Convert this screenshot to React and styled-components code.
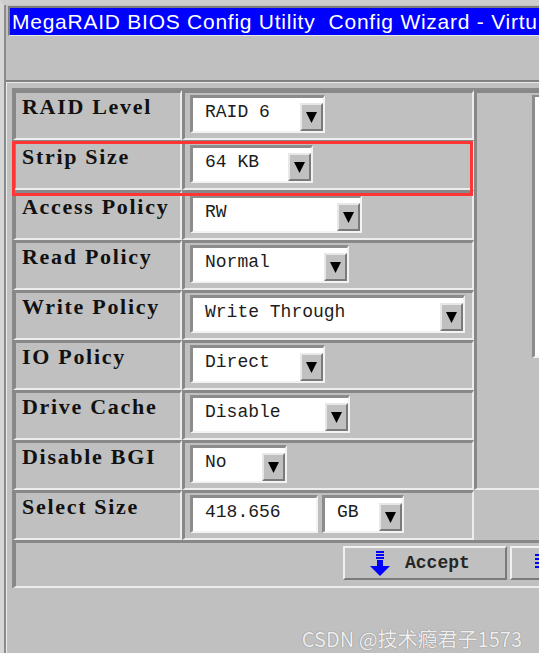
import React from 'react';
import styled, { createGlobalStyle } from 'styled-components';

const Global = createGlobalStyle`
  html, body { margin: 0; padding: 0; background: #c0c0c0; }
  body { width: 539px; height: 653px; overflow: hidden; }
  #root { width: 539px; height: 653px; }
`;

const Screen = styled.div`
  position: relative;
  box-sizing: border-box;
  width: 539px;
  height: 653px;
  overflow: hidden;
  background: #c0c0c0;
  border-top: 5px solid #cdcdcd;
  border-left: 4px solid #d6d6d6;
  display: flex;
  flex-direction: column;
`;

const Frame = styled.div`
  flex: 1;
  display: flex;
  flex-direction: column;
  border-left: 2px solid #8a8a8a;
  min-width: 0;
`;

const TitleBar = styled.div`
  margin: 1px 0 0 2px;
  height: 27px;
  border-top: 2px solid #7c7c7c;
  border-left: 2px solid #7c7c7c;
  border-bottom: 1px solid #e6e6e6;
  background: #0000ff;
  color: #ffffff;
  font-family: "Liberation Sans", Arial, sans-serif;
  font-size: 21px;
  letter-spacing: 0.75px;
  line-height: 27px;
  padding-left: 2px;
  white-space: pre;
  overflow: hidden;
`;

const Panel = styled.div`
  flex: 1;
  margin-top: 44px;
  border-top: 2px solid #808080;
  box-shadow: inset 1px 1px 0 #ececec;
  padding: 6px 0 0 6px;
`;

const Table = styled.div`
  border-top: 2px solid #8a8a8a;
  border-left: 1px solid #8a8a8a;
  display: flex;
  flex-direction: column;
`;

const Upper = styled.div`
  display: flex;
  align-items: flex-start;
`;

const Rows = styled.div`
  display: flex;
  flex-direction: column;
  width: 461px;
  flex-shrink: 0;
`;

const Row = styled.div`
  position: relative;
  display: flex;
  height: 50px;
`;

const Highlight = styled.div`
  position: absolute;
  z-index: 2;
  left: -1px;
  top: 1px;
  width: 461px;
  height: 55px;
  box-sizing: border-box;
  border: 3px solid #ff3535;
  pointer-events: none;
`;

const Cell = styled.div`
  box-sizing: border-box;
  height: 100%;
  border-top: 3px solid #888888;
  border-left: 3px solid #888888;
  border-bottom: 2px solid #ededed;
  border-right: 2px solid #ededed;
`;

const LabelCell = styled(Cell)`
  width: 169px;
  padding: 3px 0 0 6px;
  font-family: "Liberation Serif", "Times New Roman", serif;
  font-weight: bold;
  font-size: 22px;
  line-height: 1;
  letter-spacing: 1.7px;
  color: #111111;
  white-space: nowrap;
`;

const ValueCell = styled(Cell)`
  width: 292px;
  padding: 2px 0 0 5px;
  display: flex;
  align-items: flex-start;
  gap: 4px;
`;

const Field = styled.div`
  box-sizing: border-box;
  width: ${(p) => p.$w}px;
  height: 38px;
  flex-shrink: 0;
  display: flex;
  align-items: flex-end;
  background: #ffffff;
  border-top: 3px solid #8c8c8c;
  border-left: 3px solid #8c8c8c;
  border-bottom: 2px solid #f2f2f2;
  border-right: 2px solid #f2f2f2;
`;

const FieldText = styled.span`
  flex: 1;
  align-self: stretch;
  display: flex;
  align-items: center;
  padding: 0 0 5px 12px;
  font-family: "Liberation Mono", "Courier New", monospace;
  font-size: 18px;
  color: #1c1c1c;
  white-space: pre;
`;

const DropBtn = styled.span`
  box-sizing: border-box;
  width: 23px;
  height: 28px;
  flex-shrink: 0;
  background: #c0c0c0;
  border-top: 2px solid #e8e8e8;
  border-left: 2px solid #e8e8e8;
  border-bottom: 2px solid #7a7a7a;
  border-right: 2px solid #7a7a7a;
  display: flex;
  align-items: center;
  justify-content: center;
`;

const RightPanel = styled.div`
  box-sizing: border-box;
  flex: 1;
  height: 400px;
  border-top: 3px solid #888888;
  border-left: 3px solid #888888;
  border-bottom: 2px solid #ededed;
  padding: 2px 0 0 55px;
  display: flex;
  align-items: flex-start;
`;

const ListBox = styled.div`
  flex: 1;
  height: 263px;
  box-sizing: border-box;
  background: #ffffff;
  border-top: 2px solid #8c8c8c;
  border-left: 3px solid #8c8c8c;
  border-bottom: 2px solid #f2f2f2;
`;

const ButtonRow = styled.div`
  box-sizing: border-box;
  width: 600px;
  height: 48px;
  flex-shrink: 0;
  border-top: 3px solid #888888;
  border-left: 3px solid #888888;
  border-bottom: 2px solid #ededed;
  display: flex;
  gap: 3px;
  padding: 3px 0 0 327px;
`;

const Btn = styled.div`
  box-sizing: border-box;
  width: 164px;
  height: 34px;
  flex-shrink: 0;
  background: #c0c0c0;
  border-top: 2px solid #f0f0f0;
  border-left: 2px solid #f0f0f0;
  border-bottom: 2px solid #7a7a7a;
  border-right: 2px solid #7a7a7a;
  display: flex;
  align-items: center;
  gap: 15px;
  padding-left: ${(p) => p.$pad}px;
  font-family: "Liberation Mono", "Courier New", monospace;
  font-weight: bold;
  font-size: 18px;
  color: #262626;
`;

const Watermark = styled.div`
  position: absolute;
  right: 17px;
  bottom: 3px;
  font-family: "Noto Sans CJK SC", "Noto Sans", sans-serif;
  font-size: 20px;
  line-height: 22px;
  color: #eeeeee;
  text-shadow: 0 0 1px #8a8a8a, 0 0 1px #8a8a8a;
  white-space: nowrap;
`;

const Triangle = () => (
  <svg width="11" height="12" viewBox="0 0 11 12">
    <polygon points="0,1 11,1 5.5,12" fill="#000" />
  </svg>
);

const AcceptIcon = () => (
  <svg width="20" height="25" viewBox="0 0 20 25">
    <rect x="6" y="0" width="8" height="2" fill="#0000ff" />
    <rect x="6" y="3" width="8" height="2" fill="#0000ff" />
    <rect x="6" y="6" width="8" height="2" fill="#0000ff" />
    <rect x="7" y="9" width="6" height="7" fill="#0000ff" />
    <polygon points="0,15 20,15 10,25" fill="#0000ff" />
  </svg>
);

const NextIcon = () => (
  <svg width="20" height="25" viewBox="0 0 20 25">
    <rect x="1" y="3" width="4" height="2" fill="#0000ff" />
    <rect x="1" y="7" width="4" height="2" fill="#0000ff" />
    <rect x="1" y="11" width="4" height="2" fill="#0000ff" />
    <rect x="1" y="15" width="4" height="2" fill="#0000ff" />
  </svg>
);

const Select = ({ w, value }) => (
  <Field $w={w}>
    <FieldText>{value}</FieldText>
    <DropBtn>
      <Triangle />
    </DropBtn>
  </Field>
);

const rows = [
  { label: 'RAID Level', value: 'RAID 6', w: 135 },
  { label: 'Strip Size', value: '64 KB', w: 123, hl: true },
  { label: 'Access Policy', value: 'RW', w: 172 },
  { label: 'Read Policy', value: 'Normal', w: 159 },
  { label: 'Write Policy', value: 'Write Through', w: 275 },
  { label: 'IO Policy', value: 'Direct', w: 135 },
  { label: 'Drive Cache', value: 'Disable', w: 160 },
  { label: 'Disable BGI', value: 'No', w: 97 },
];

export default function App() {
  return (
    <>
      <Global />
      <Screen>
        <Frame>
          <TitleBar>{'MegaRAID BIOS Config Utility  Config Wizard - Virtu'}</TitleBar>
          <Panel>
            <Table>
              <Upper>
                <Rows>
                  {rows.map((r) => (
                    <Row key={r.label}>
                      <LabelCell>{r.label}</LabelCell>
                      <ValueCell>
                        <Select w={r.w} value={r.value} />
                      </ValueCell>
                      {r.hl && <Highlight />}
                    </Row>
                  ))}
                  <Row>
                    <LabelCell>Select Size</LabelCell>
                    <ValueCell>
                      <Field $w={128}>
                        <FieldText>418.656</FieldText>
                      </Field>
                      <Select w={82} value="GB" />
                    </ValueCell>
                  </Row>
                </Rows>
                <RightPanel>
                  <ListBox />
                </RightPanel>
              </Upper>
              <ButtonRow>
                <Btn $pad={25}>
                  <AcceptIcon />
                  <span>Accept</span>
                </Btn>
                <Btn $pad={22}>
                  <NextIcon />
                </Btn>
              </ButtonRow>
            </Table>
          </Panel>
        </Frame>
        <Watermark>CSDN @技术瘾君子1573</Watermark>
      </Screen>
    </>
  );
}
